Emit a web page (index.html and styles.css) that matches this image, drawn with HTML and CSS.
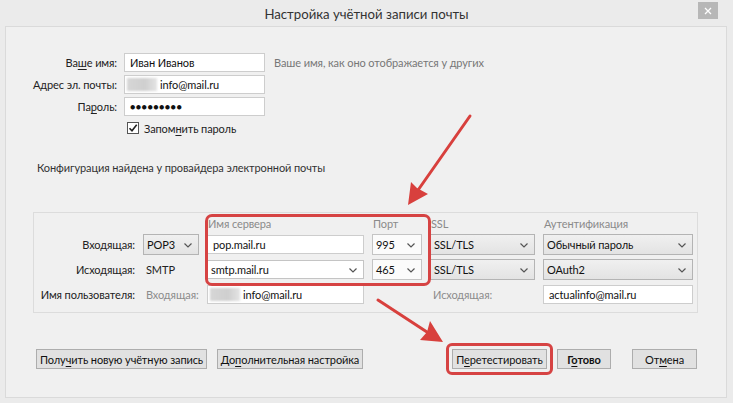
FILE: index.html
```html
<!DOCTYPE html>
<html lang="ru">
<head>
<meta charset="utf-8">
<title>Настройка учётной записи почты</title>
<link rel="stylesheet" href="styles.css">
</head>
<body>
<div class="window">
  <div class="titlebar">
    <span></span>
    <span class="title">Настройка учётной записи почты</span>
    <span class="close"><svg width="8" height="8" viewBox="0 0 8 8"><path d="M1 1L7 7M7 1L1 7" stroke="#fff" stroke-width="1.3"/></svg></span>
  </div>
  <div class="content">
    <div class="form">
      <span class="lbl">Ва<u>ш</u>е имя:</span>
      <div class="field">Иван Иванов</div>
      <span class="hint">Ваше имя, как оно отображается у других</span>
      <span class="lbl">Адрес эл. почты:</span>
      <div class="field"><span class="blur"></span>info@mail.ru</div>
      <span></span>
      <span class="lbl">Па<u>р</u>оль:</span>
      <div class="field pwd">●●●●●●●●●</div>
      <span></span>
    </div>
    <div class="remember">
      <span class="check"><svg width="10" height="10" viewBox="0 0 10 10"><path d="M1.5 5.2L4 7.8L8.7 1.8" fill="none" stroke="#222" stroke-width="1.6"/></svg></span>
      <span>Запом<u>н</u>ить пароль</span>
    </div>
    <p class="found">Конфигурация найдена у провайдера электронной почты</p>
    <div class="group">
      <div class="cfg">
        <span></span><span></span>
        <span class="head">Имя сервера</span>
        <span class="head">Порт</span>
        <span class="head">SSL</span>
        <span class="head">Аутентификация</span>

        <span class="lbl">Входящая:</span>
        <div class="select grey">POP3<svg class="chev" width="8" height="5" viewBox="0 0 8 5"><path d="M0.5 0.5L4 4L7.5 0.5" fill="none" stroke="#555" stroke-width="1.2"/></svg></div>
        <div class="field">pop.mail.ru</div>
        <div class="select">995<svg class="chev" width="8" height="5" viewBox="0 0 8 5"><path d="M0.5 0.5L4 4L7.5 0.5" fill="none" stroke="#555" stroke-width="1.2"/></svg></div>
        <div class="select grey">SSL/TLS<svg class="chev" width="8" height="5" viewBox="0 0 8 5"><path d="M0.5 0.5L4 4L7.5 0.5" fill="none" stroke="#555" stroke-width="1.2"/></svg></div>
        <div class="select grey">Обычный пароль<svg class="chev" width="8" height="5" viewBox="0 0 8 5"><path d="M0.5 0.5L4 4L7.5 0.5" fill="none" stroke="#555" stroke-width="1.2"/></svg></div>

        <span class="lbl">Исходящая:</span>
        <span class="plain">SMTP</span>
        <div class="select combo">smtp.mail.ru<svg class="chev" width="8" height="5" viewBox="0 0 8 5"><path d="M0.5 0.5L4 4L7.5 0.5" fill="none" stroke="#555" stroke-width="1.2"/></svg></div>
        <div class="select">465<svg class="chev" width="8" height="5" viewBox="0 0 8 5"><path d="M0.5 0.5L4 4L7.5 0.5" fill="none" stroke="#555" stroke-width="1.2"/></svg></div>
        <div class="select grey">SSL/TLS<svg class="chev" width="8" height="5" viewBox="0 0 8 5"><path d="M0.5 0.5L4 4L7.5 0.5" fill="none" stroke="#555" stroke-width="1.2"/></svg></div>
        <div class="select grey">OAuth2<svg class="chev" width="8" height="5" viewBox="0 0 8 5"><path d="M0.5 0.5L4 4L7.5 0.5" fill="none" stroke="#555" stroke-width="1.2"/></svg></div>

        <span class="lbl">Имя пользователя:</span>
        <span class="plain muted">Входящая:</span>
        <div class="field"><span class="blur"></span>info@mail.ru</div>
        <span></span>
        <span class="plain muted">Исходящая:</span>
        <div class="field">actualinfo@mail.ru</div>
      </div>
      <div class="highlight hl-server"></div>
    </div>
    <div class="actions">
      <button class="btn btn-new">Полу<u>ч</u>ить новую учётную запись</button>
      <button class="btn btn-adv">До<u>п</u>олнительная настройка</button>
      <span class="spacer"></span>
      <span class="hl-wrap"><button class="btn btn-retest">П<u>е</u>ретестировать</button></span>
      <button class="btn btn-done">Г<u>о</u>тово</button>
      <button class="btn btn-cancel">От<u>м</u>ена</button>
    </div>
  </div>
  <svg class="arrows" width="733" height="403" viewBox="0 0 733 403">
    <line x1="470" y1="116" x2="416" y2="193" stroke="#d8403d" stroke-width="3" stroke-linecap="round"/>
    <polygon points="408,205 411,182 417,188 428,194" fill="#d8403d"/>
    <line x1="378" y1="300" x2="430" y2="334" stroke="#d8403d" stroke-width="3" stroke-linecap="round"/>
    <polygon points="443,342 420,340 427,332 430,321" fill="#d8403d"/>
  </svg>
</div>
</body>
</html>
```

FILE: styles.css
```css
* { box-sizing: border-box; }
html, body { margin: 0; padding: 0; }
body {
  width: 733px;
  height: 403px;
  overflow: hidden;
  background: #ebebeb;
  font-family: Lato, "Noto Sans", sans-serif;
  font-size: 11px;
  letter-spacing: -0.1px;
  color: #222;
}
u { text-decoration: underline; text-underline-offset: 2px; }
.window { position: relative; width: 733px; height: 403px; }

.titlebar {
  height: 26px;
  display: grid;
  grid-template-columns: 1fr auto 1fr;
  align-items: center;
}
.title { font-size: 13.2px; letter-spacing: 0; color: #333; padding-top: 2px; }
.close {
  justify-self: end;
  align-self: start;
  margin: 2px 15px 0 0;
  width: 20px;
  height: 17px;
  background: #b7b7b7;
  display: flex;
  align-items: center;
  justify-content: center;
}

.content {
  margin: 0 6px 0 5px;
  height: 372px;
  border: 1px solid #dadada;
  background: #f0f0f0;
  padding-top: 26px;
}

.form {
  display: grid;
  grid-template-columns: 100px 141px auto;
  grid-template-rows: repeat(3, 19px);
  column-gap: 7px;
  row-gap: 3px;
  margin-left: 11px;
  align-items: center;
}
.lbl { text-align: right; white-space: nowrap; color: #222; }
.field {
  height: 19px;
  background: #fff;
  border: 1px solid #cdcdcd;
  padding-left: 5px;
  display: flex;
  align-items: center;
  white-space: nowrap;
  overflow: hidden;
  color: #111;
}
.pwd { font-size: 9px; letter-spacing: 0.4px; color: #111; }
.blur {
  display: inline-block;
  width: 30px;
  height: 13px;
  margin-left: -3px;
  margin-right: 3px;
  background: linear-gradient(90deg, #d6d6d6, #cfcfcf 60%, #e4e4e4);
  filter: blur(1px);
}
.hint { color: #777; padding-left: 2px; white-space: nowrap; }

.remember {
  margin: 6px 0 0 121px;
  height: 12px;
  display: flex;
  align-items: center;
  gap: 5px;
}
.check {
  width: 12px;
  height: 12px;
  border: 1px solid #555;
  background: #fff;
  display: flex;
  align-items: center;
  justify-content: center;
}

.found {
  margin: 26px 0 0 31px;
  line-height: 16px;
  color: #333;
}

.group {
  position: relative;
  margin: 36px 0 0 27px;
  width: 665px;
  height: 101px;
  border: 1px solid #dcdcdc;
}
.cfg {
  display: grid;
  grid-template-columns: 96px 56px 157px 50px 105px 150px;
  grid-template-rows: 14px 21px 21px 21px;
  column-gap: 8px;
  row-gap: 4px;
  padding: 3px 5px 0 5px;
  align-items: center;
}
.head { color: #8a8a8a; white-space: nowrap; padding-left: 1px; }
.plain { padding-left: 3px; white-space: nowrap; }
.muted { color: #8c8c8c; }
.cfg .field { height: 19px; }
.select {
  position: relative;
  height: 21px;
  border: 1px solid #c4c4c4;
  background: #fbfbfb;
  padding-left: 3px;
  display: flex;
  align-items: center;
  white-space: nowrap;
  color: #111;
}
.select.grey {
  background: linear-gradient(#f0f0f0, #e3e3e3);
  border-color: #b4b4b4;
}
.select.combo { background: #fff; height: 19px; }
.chev { position: absolute; right: 6px; top: 50%; margin-top: -2px; }

.highlight {
  position: absolute;
  border: 3px solid #d64343;
  border-radius: 7px;
  pointer-events: none;
}
.hl-server { left: 171px; top: 1px; width: 226px; height: 72px; }

.actions {
  display: flex;
  align-items: center;
  margin: 36px 29px 0 30px;
  height: 20px;
}
.btn {
  height: 20px;
  margin: 0;
  padding: 0;
  font: inherit;
  letter-spacing: inherit;
  color: #111;
  background: #e1e1e1;
  border: 1px solid #adadad;
  white-space: nowrap;
}
.btn-new { width: 171px; }
.btn-adv { width: 146px; margin-left: 10px; }
.spacer { flex: 1; }
.hl-wrap { position: relative; display: flex; }
.hl-wrap::after {
  content: "";
  position: absolute;
  left: -6px; top: -6px; right: -6px; bottom: -6px;
  border: 3px solid #d64343;
  border-radius: 6px;
}
.btn-retest { width: 95px; }
.btn-done { width: 54px; margin-left: 10px; font-weight: 700; }
.btn-cancel { width: 65px; margin-left: 21px; }

.arrows { position: absolute; left: 0; top: 0; pointer-events: none; }
```
